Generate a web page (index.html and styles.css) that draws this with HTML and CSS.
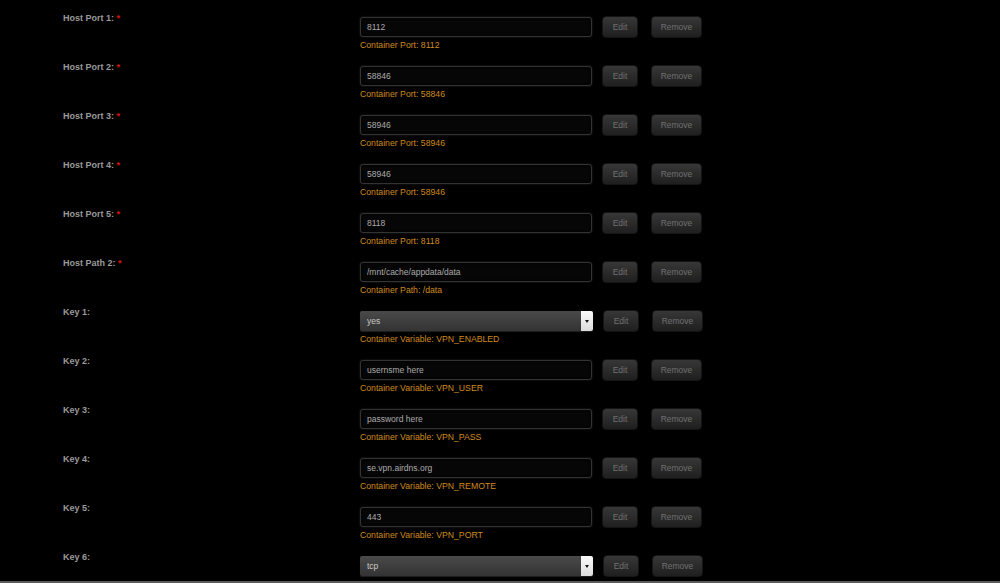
FILE: index.html
```html
<!DOCTYPE html>
<html lang="en">
<head>
    <meta charset="UTF-8">
    <meta name="viewport" content="width=device-width, initial-scale=1.0">
    <title>Container Settings</title>
    <link rel="stylesheet" href="styles.css">
</head>
<body>
    <div class="settings">
        <div class="row">
            <div class="label">Host Port 1: <span class="req">*</span></div>
            <div class="field">
                <div class="controls">
                    <input type="text" class="text-input" value="8112">
                    <button class="btn edit">Edit</button>
                    <button class="btn remove">Remove</button>
                </div>
                <div class="hint">Container Port: 8112</div>
            </div>
        </div>
        <div class="row">
            <div class="label">Host Port 2: <span class="req">*</span></div>
            <div class="field">
                <div class="controls">
                    <input type="text" class="text-input" value="58846">
                    <button class="btn edit">Edit</button>
                    <button class="btn remove">Remove</button>
                </div>
                <div class="hint">Container Port: 58846</div>
            </div>
        </div>
        <div class="row">
            <div class="label">Host Port 3: <span class="req">*</span></div>
            <div class="field">
                <div class="controls">
                    <input type="text" class="text-input" value="58946">
                    <button class="btn edit">Edit</button>
                    <button class="btn remove">Remove</button>
                </div>
                <div class="hint">Container Port: 58946</div>
            </div>
        </div>
        <div class="row">
            <div class="label">Host Port 4: <span class="req">*</span></div>
            <div class="field">
                <div class="controls">
                    <input type="text" class="text-input" value="58946">
                    <button class="btn edit">Edit</button>
                    <button class="btn remove">Remove</button>
                </div>
                <div class="hint">Container Port: 58946</div>
            </div>
        </div>
        <div class="row">
            <div class="label">Host Port 5: <span class="req">*</span></div>
            <div class="field">
                <div class="controls">
                    <input type="text" class="text-input" value="8118">
                    <button class="btn edit">Edit</button>
                    <button class="btn remove">Remove</button>
                </div>
                <div class="hint">Container Port: 8118</div>
            </div>
        </div>
        <div class="row">
            <div class="label">Host Path 2: <span class="req">*</span></div>
            <div class="field">
                <div class="controls">
                    <input type="text" class="text-input" value="/mnt/cache/appdata/data">
                    <button class="btn edit">Edit</button>
                    <button class="btn remove">Remove</button>
                </div>
                <div class="hint">Container Path: /data</div>
            </div>
        </div>
        <div class="row">
            <div class="label">Key 1:</div>
            <div class="field">
                <div class="controls">
                    <div class="select">
                        <select><option>yes</option><option>no</option></select>
                        <span class="arrow"></span>
                    </div>
                    <button class="btn edit">Edit</button>
                    <button class="btn remove">Remove</button>
                </div>
                <div class="hint">Container Variable: VPN_ENABLED</div>
            </div>
        </div>
        <div class="row">
            <div class="label">Key 2:</div>
            <div class="field">
                <div class="controls">
                    <input type="text" class="text-input" value="usernsme here">
                    <button class="btn edit">Edit</button>
                    <button class="btn remove">Remove</button>
                </div>
                <div class="hint">Container Variable: VPN_USER</div>
            </div>
        </div>
        <div class="row">
            <div class="label">Key 3:</div>
            <div class="field">
                <div class="controls">
                    <input type="text" class="text-input" value="password here">
                    <button class="btn edit">Edit</button>
                    <button class="btn remove">Remove</button>
                </div>
                <div class="hint">Container Variable: VPN_PASS</div>
            </div>
        </div>
        <div class="row">
            <div class="label">Key 4:</div>
            <div class="field">
                <div class="controls">
                    <input type="text" class="text-input" value="se.vpn.airdns.org">
                    <button class="btn edit">Edit</button>
                    <button class="btn remove">Remove</button>
                </div>
                <div class="hint">Container Variable: VPN_REMOTE</div>
            </div>
        </div>
        <div class="row">
            <div class="label">Key 5:</div>
            <div class="field">
                <div class="controls">
                    <input type="text" class="text-input" value="443">
                    <button class="btn edit">Edit</button>
                    <button class="btn remove">Remove</button>
                </div>
                <div class="hint">Container Variable: VPN_PORT</div>
            </div>
        </div>
        <div class="row">
            <div class="label">Key 6:</div>
            <div class="field">
                <div class="controls">
                    <div class="select">
                        <select><option>tcp</option><option>udp</option></select>
                        <span class="arrow"></span>
                    </div>
                    <button class="btn edit">Edit</button>
                    <button class="btn remove">Remove</button>
                </div>
            </div>
        </div>
    </div>

    <div class="footer-bar"></div>
</body>
</html>
```

FILE: styles.css
```css
html, body {
    height: 100%;
    overflow: hidden;
}
body {
    font-family: "Liberation Sans", Arial, sans-serif;
    margin: 0;
    padding: 0;
    background-color: #000;
}
.settings {
    padding: 13px 0 0 63px;
}
.row {
    display: flex;
    height: 49px;
}
.label {
    width: 297px;
    flex: none;
    font-size: 9px;
    line-height: 11px;
    font-weight: bold;
    color: #9a9a9a;
}
.label .req {
    color: #e01010;
}
.field {
    padding-top: 3px;
}
.controls {
    display: flex;
    align-items: center;
    height: 22px;
}
.text-input {
    box-sizing: border-box;
    width: 232px;
    height: 20px;
    margin: 0;
    padding: 0 6px;
    background-color: #060606;
    border: 1px solid #333;
    border-radius: 3px;
    box-shadow: inset 0 0 3px #000, 0 0 2px #2a2a2a;
    color: #ababab;
    font-family: "Liberation Sans", Arial, sans-serif;
    font-size: 8.5px;
    outline: none;
}
.select {
    display: flex;
    width: 233px;
    height: 20px;
    border-radius: 2px;
    overflow: hidden;
    box-shadow: 0 1px 1px #222;
}
.select select {
    flex: 1;
    appearance: none;
    -webkit-appearance: none;
    margin: 0;
    padding: 0 7px;
    height: 20px;
    border: none;
    background: linear-gradient(#4a4a4a, #333);
    color: #c8c8c8;
    font-family: "Liberation Sans", Arial, sans-serif;
    font-size: 8.5px;
    outline: none;
}
.select .arrow {
    width: 12px;
    display: flex;
    align-items: center;
    justify-content: center;
    background: linear-gradient(#fafafa, #dcdcdc);
}
.select .arrow::after {
    content: "";
    border-left: 2.5px solid transparent;
    border-right: 2.5px solid transparent;
    border-top: 3px solid #111;
}
.btn {
    box-sizing: border-box;
    height: 22px;
    margin: 0;
    padding: 0;
    border: 1px solid #151515;
    border-radius: 4px;
    background: linear-gradient(#373737, #1f1f1f);
    color: #717171;
    font-family: "Liberation Sans", Arial, sans-serif;
    font-size: 8.5px;
    cursor: pointer;
}
.btn.edit {
    width: 36px;
    margin-left: 10px;
}
.btn.remove {
    width: 51px;
    margin-left: 13px;
}
.hint {
    margin-top: 2px;
    font-size: 8.7px;
    line-height: 11px;
    color: #cf8a1c;
}
.footer-bar {
    position: fixed;
    left: 0;
    right: 0;
    bottom: 0;
    height: 2px;
    background-color: #5a5a5a;
}
```
